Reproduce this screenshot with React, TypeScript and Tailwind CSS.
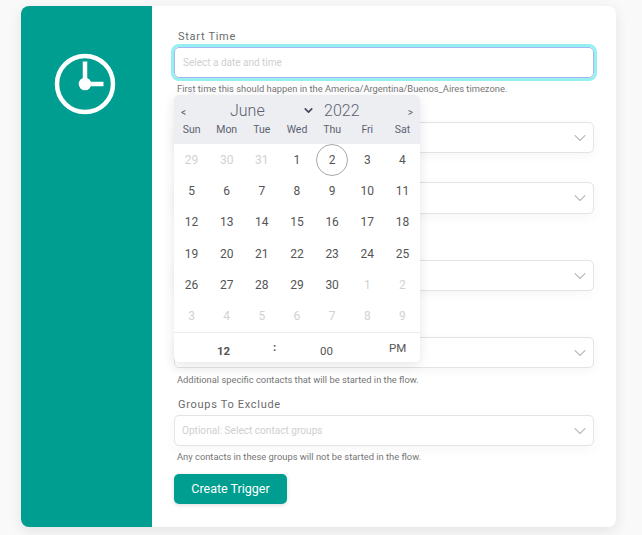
import { ChevronDown } from "lucide-react";

const WEEK = ["Sun", "Mon", "Tue", "Wed", "Thu", "Fri", "Sat"];

const DAYS: { d: number; muted?: boolean; today?: boolean }[] = [
  { d: 29, muted: true }, { d: 30, muted: true }, { d: 31, muted: true },
  { d: 1 }, { d: 2, today: true }, { d: 3 }, { d: 4 },
  ...[5, 6, 7, 8, 9, 10, 11, 12, 13, 14, 15, 16, 17, 18, 19, 20, 21, 22, 23, 24, 25, 26, 27, 28, 29, 30].map(d => ({ d })),
  ...[1, 2, 3, 4, 5, 6, 7, 8, 9].map(d => ({ d, muted: true })),
];

function Select({ placeholder, tall }: { placeholder?: string; tall?: boolean }) {
  return (
    <div className={`${tall ? "h-[32px]" : "h-[31px]"} border border-[#e3e3e3] rounded-[5px] bg-white shadow-[0_3px_12px_rgba(0,0,0,0.04)] flex items-center pl-[7px] pr-[3px]`}>
      <span className="flex-1 text-[10.1px] text-[#cfcfcf]">{placeholder}</span>
      <ChevronDown size={20} strokeWidth={1.3} className="text-[#bdbdbd]" />
    </div>
  );
}

function Help({ children }: { children: React.ReactNode }) {
  return <p className="mt-[4px] pl-[3px] h-[14px] leading-[14px] text-[9.35px] text-[#757575]">{children}</p>;
}

function Calendar() {
  return (
    <div className="absolute left-0 top-[66px] w-[246px] h-[267px] bg-white rounded-[5px] shadow-[0_3px_12px_rgba(0,0,0,0.1)] text-[#555555]">
      {/* little arrow */}
      <div className="absolute left-[15px] -top-[3px] w-[7px] h-[7px] rotate-45 bg-[#eceef2]" />
      <div className="relative bg-[#eceef2] rounded-t-[5px] h-[49px]">
        <div className="h-[28px] pt-[3px] flex items-center text-[#5e6170]">
          <span className="w-[21px] pl-[7px] pt-[4px] text-[10px]">&lt;</span>
          <span className="ml-[35px] w-[72px] text-[16px] font-light">June</span>
          <ChevronDown size={13} strokeWidth={3} className="text-[#45475a]" />
          <span className="ml-[9px] text-[16px] font-light">2022</span>
          <span className="ml-auto pr-[7px] pt-[4px] text-[10px]">&gt;</span>
        </div>
        <div className="grid grid-cols-7 text-center text-[10.5px] leading-[14px] text-[#5e6170]">
          {WEEK.map(w => <span key={w}>{w}</span>)}
        </div>
      </div>
      <div className="grid grid-cols-7 text-center text-[12px] pt-[0.5px]">
        {DAYS.map((x, i) => (
          <div key={i} className="h-[31.2px] flex items-center justify-center">
            <span
              className={
                x.today
                  ? "w-[32px] h-[32px] rounded-full border border-[#a8a8a8] flex items-center justify-center"
                  : x.muted
                    ? "text-[#d2d2d2]"
                    : ""
              }
            >
              {x.d}
            </span>
          </div>
        ))}
      </div>
      <div className="h-[31px] border-t border-[#ececec] relative text-[11.5px]">
        <span className="absolute left-[43px] top-[11px] font-bold leading-[14px]">12</span>
        <span className="absolute left-[99px] top-[7px] font-bold leading-[14px]">:</span>
        <span className="absolute left-[146px] top-[11px] leading-[14px]">00</span>
        <span className="absolute left-[215px] top-[8px] leading-[14px]">PM</span>
      </div>
    </div>
  );
}

export default function App() {
  return (
    <div className="min-h-[535px] bg-[#f9f9f9] pt-[6px] pl-[21px] font-['Roboto',sans-serif]">
      <div className="w-[595px] h-[521px] flex bg-white rounded-[8px] overflow-hidden shadow-[0_4px_14px_rgba(0,0,0,0.09)]">
        {/* Sidebar */}
        <div className="w-[131px] bg-[#009e91] pt-[47px] flex justify-center">
          <svg width="62" height="62" viewBox="0 0 62 62" fill="none" className="-ml-[3px]">
            <circle cx="31" cy="31" r="28" stroke="white" strokeWidth="4.5" />
            <path d="M31 8.5V31H49.5" stroke="white" strokeWidth="4.5" />
            <circle cx="31" cy="31" r="6.3" fill="white" />
          </svg>
        </div>

        {/* Form */}
        <div className="flex-1 pl-[22px] pr-[22px] pt-[23px] relative">
          <div className="relative">
            <label className="block pl-[4px] pt-[1px] h-[14px] leading-[14px] text-[11px] tracking-[0.7px] text-[#6b6b6b]">Start Time</label>
            <div className="mt-[4px] h-[31px] rounded-[5px] border border-[#a4b6f5] outline-3 outline-[#96f0f0] bg-white flex items-center pl-[8px] text-[10px] text-[#cfcfcf]">
              Select a date and time
            </div>
            <Help>First time this should happen in the America/Argentina/Buenos_Aires timezone.</Help>
            <Calendar />
          </div>

          <div className="mt-[26px]"><Select /></div>
          <div className="mt-[29px]"><Select tall /></div>
          <div className="mt-[46px]"><Select /></div>
          <div className="mt-[46px]"><Select /></div>
          <div className="pt-[1px]"><Help>Additional specific contacts that will be started in the flow.</Help></div>

          <label className="block mt-[11px] pl-[4px] h-[14px] leading-[14px] text-[11px] tracking-[0.7px] text-[#6b6b6b]">Groups To Exclude</label>
          <div className="mt-[3px]"><Select placeholder="Optional: Select contact groups" /></div>
          <Help>Any contacts in these groups will not be started in the flow.</Help>

          <button className="mt-[10px] w-[113px] h-[30px] rounded-[5px] bg-[#009e91] text-white text-[12.5px] shadow-[0_1px_4px_rgba(0,0,0,0.15)]">
            Create Trigger
          </button>
        </div>
      </div>
    </div>
  );
}
